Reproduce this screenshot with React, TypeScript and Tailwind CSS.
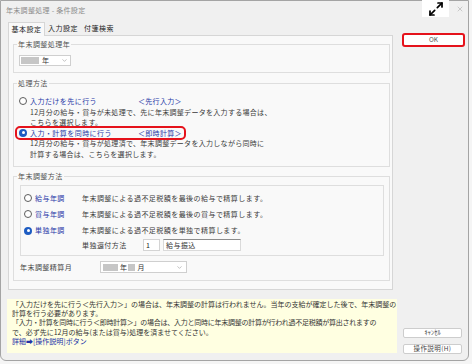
import { Maximize2, X, ChevronDown } from 'lucide-react';

function Radio({ checked }: { checked?: boolean }) {
  if (checked) {
    return (
      <span className="w-[8px] h-[8px] rounded-full bg-[#1d5cc2] flex items-center justify-center shrink-0">
        <span className="w-[3px] h-[3px] rounded-full bg-white" />
      </span>
    );
  }
  return <span className="block w-[8px] h-[8px] rounded-full border border-[#5c5c5c] bg-white shrink-0" />;
}

function Placeholder({ w }: { w: string }) {
  return <span className={`block h-[7px] bg-[#c6c6c6] ${w}`} />;
}

export default function App() {
  return (
    <div className="w-[472px] h-[364px] bg-[#f5f5f5] font-['Noto_Sans_CJK_JP','Noto_Sans_CJK_SC',sans-serif] text-[7px] text-[#3a3a3a]">
      <div className="w-[469px] h-[361px] bg-[#f0f0f0] border border-[#a4a4a4] rounded-b-[6px] flex flex-col">
        {/* title bar */}
        <div className="h-[20px] flex items-start shrink-0">
          <span className="pl-[5px] mt-[5px] tracking-[0.3px] text-[#8a8a8a] leading-[9px]">年末調整処理 - 条件設定</span>
          <div className="ml-auto -mt-px w-[27px] h-[17px] bg-white flex items-center justify-center">
            <Maximize2 size={16} strokeWidth={2.6} className="text-black" />
          </div>
          <div className="ml-[7px] mr-[4px] mt-[4px] w-[8px] h-[8px] flex items-center justify-center">
            <X size={10} strokeWidth={1.4} className="text-[#9a9a9a]" />
          </div>
        </div>

        <div className="flex flex-1 pb-[6px]">
          {/* left column */}
          <div className="ml-[6px] w-[390px] flex flex-col">
            {/* tabs */}
            <div className="mt-[1px] h-[13px] flex items-end ml-[1px] tracking-[0.5px]">
              <div className="relative z-10 -mb-px w-[37px] h-[14px] bg-[#f9f9f9] border-x border-t border-[#d6d6d6] flex items-center justify-center text-[#222]">基本設定</div>
              <div className="w-[36px] h-[13px] flex items-center justify-center text-[#222]">入力設定</div>
              <div className="w-[36px] h-[13px] flex items-center justify-center text-[#222]">付箋検索</div>
            </div>

            {/* panel */}
            <div className="ml-[1px] w-[385px] h-[255px] bg-[#f9f9f9] border border-[#d6d6d6] tracking-[0.45px]">
              {/* group 1 */}
              <fieldset className="ml-[4px] w-[377px] mt-[4px] border border-[#dedede]">
                <legend className="ml-[3px] px-[1px] leading-[8px] text-[#505050]">年末調整処理年</legend>
                <div className="mt-[7px] mb-[6px] ml-[5px] w-[52px] h-[11px] bg-white border border-[#cfcfcf] flex items-center pl-[1px]">
                  <Placeholder w="w-[18px]" />
                  <span className="ml-[3px] text-[#333]">年</span>
                  <ChevronDown size={7} strokeWidth={1.5} className="ml-auto mr-[2px] text-[#777]" />
                </div>
              </fieldset>

              {/* group 2 */}
              <fieldset className="ml-[4px] w-[377px] mt-[6px] border border-[#dedede] pb-[7px]">
                <legend className="ml-[3px] px-[1px] leading-[8px] text-[#505050]">処理方法</legend>
                <div className="mt-[9px] leading-[10.5px]">
                  <div className="flex items-center h-[10.5px] ml-[3px]">
                    <span className="ml-[2px] mr-[3px]"><Radio /></span>
                    <span className="w-[108px] text-[#2536a6]">入力だけを先に行う</span>
                    <span className="text-[#2536a6] tracking-[0.3px]">＜先行入力＞</span>
                  </div>
                  <div className="ml-[16px] tracking-[0.3px]">12月分の給与・賞与が未処理で、先に年末調整データを入力する場合は、</div>
                  <div className="ml-[16px] tracking-[0.3px]">こちらを選択します。</div>
                  <div className="flex items-center h-[10.5px] ml-[3px] w-[167px] outline-2 outline-[#e5121b] rounded-[3px]">
                    <span className="ml-[2px] mr-[3px]"><Radio checked /></span>
                    <span className="w-[108px] text-[#2536a6]">入力・計算を同時に行う</span>
                    <span className="text-[#2536a6] tracking-[0.3px]">＜即時計算＞</span>
                  </div>
                  <div className="ml-[16px] tracking-[0.3px]">12月分の給与・賞与が処理済で、年末調整データを入力しながら同時に</div>
                  <div className="ml-[16px] tracking-[0.3px]">計算する場合は、こちらを選択します。</div>
                </div>
              </fieldset>

              {/* group 3 */}
              <fieldset className="ml-[4px] w-[377px] mt-[5px] border border-[#dedede] pb-[7px]">
                <legend className="ml-[3px] px-[1px] leading-[8px] text-[#505050]">年末調整方法</legend>
                <div className="mt-[5px] ml-[6px] w-[364px] border border-[#dedede] pt-[4px] pb-[4px]">
                  <div className="flex items-center h-[16px]">
                    <span className="ml-[3px] mr-[3px]"><Radio /></span>
                    <span className="w-[47px] text-[#2536a6]">給与年調</span>
                    <span>年末調整による過不足税額を最後の給与で精算します。</span>
                  </div>
                  <div className="flex items-center h-[16px]">
                    <span className="ml-[3px] mr-[3px]"><Radio /></span>
                    <span className="w-[47px] text-[#2536a6]">賞与年調</span>
                    <span>年末調整による過不足税額を最後の賞与で精算します。</span>
                  </div>
                  <div className="flex items-center h-[17px]">
                    <span className="ml-[3px] mr-[3px]"><Radio checked /></span>
                    <span className="w-[47px] text-[#2536a6]">単独年調</span>
                    <span>年末調整による過不足税額を単独で精算します。</span>
                  </div>
                  <div className="flex items-center h-[12px]">
                    <span className="ml-[61px] w-[61px]">単独還付方法</span>
                    <span className="w-[17px] h-[12px] bg-white border border-[#d4d4d4] flex items-center pl-[2px] text-[#222]">1</span>
                    <span className="ml-[3px] w-[78px] h-[12px] bg-white border border-[#dadada] border-t-[#8c8c8c] flex items-center pl-[2px] text-[#333]">給与振込</span>
                  </div>
                </div>
                <div className="mt-[5px] flex items-center h-[12px]">
                  <span className="ml-[6px] w-[80px] text-[#444]">年末調整精算月</span>
                  <div className="w-[87px] h-[12px] bg-white border border-[#cfcfcf] flex items-center pl-[2px]">
                    <Placeholder w="w-[15px]" />
                    <span className="ml-[2px] text-[#333]">年</span>
                    <span className="ml-[1px]"><Placeholder w="w-[7px]" /></span>
                    <span className="ml-[2px] text-[#333]">月</span>
                    <ChevronDown size={7} strokeWidth={1.5} className="ml-auto mr-[3px] text-[#777]" />
                  </div>
                </div>
              </fieldset>
            </div>

            {/* note */}
            <div className="mt-[9px] h-[54px] bg-[#ffffe1] pl-[5px] pt-px leading-[9.2px] text-[#333] whitespace-nowrap">
              <div>「入力だけを先に行う＜先行入力＞」の場合は、年末調整の計算は行われません。当年の支給が確定した後で、年末調整の</div>
              <div>計算を行う必要があります。</div>
              <div className="tracking-[-0.25px]">「入力・計算を同時に行う＜即時計算＞」の場合は、入力と同時に年末調整の計算が行われ過不足税額が算出されますの</div>
              <div>で、必ず先に12月の給与(または賞与)処理を済ませてください。</div>
              <div className="text-[#2232a8]">詳細➡[操作説明]ボタン</div>
            </div>
          </div>

          {/* right column */}
          <div className="ml-[5px] w-[63px] flex flex-col">
            <div className="mt-[12px] h-[14px] bg-white border-2 border-[#e5121b] rounded-[3px] flex items-center justify-center text-[#555] text-[6.5px]">OK</div>
            <div className="mt-auto ml-[1px] w-[59px] h-[10px] bg-white border border-[#cdcdcd] rounded-[2px] flex items-center justify-center text-[#444] text-[6.5px]">ｷｬﾝｾﾙ</div>
            <div className="mt-[6px] ml-[1px] w-[59px] h-[10px] bg-white border border-[#cdcdcd] rounded-[2px] flex items-center justify-center text-[#444] text-[6.5px] tracking-[0.4px]">操作説明(H)</div>
          </div>
        </div>
      </div>
    </div>
  );
}
